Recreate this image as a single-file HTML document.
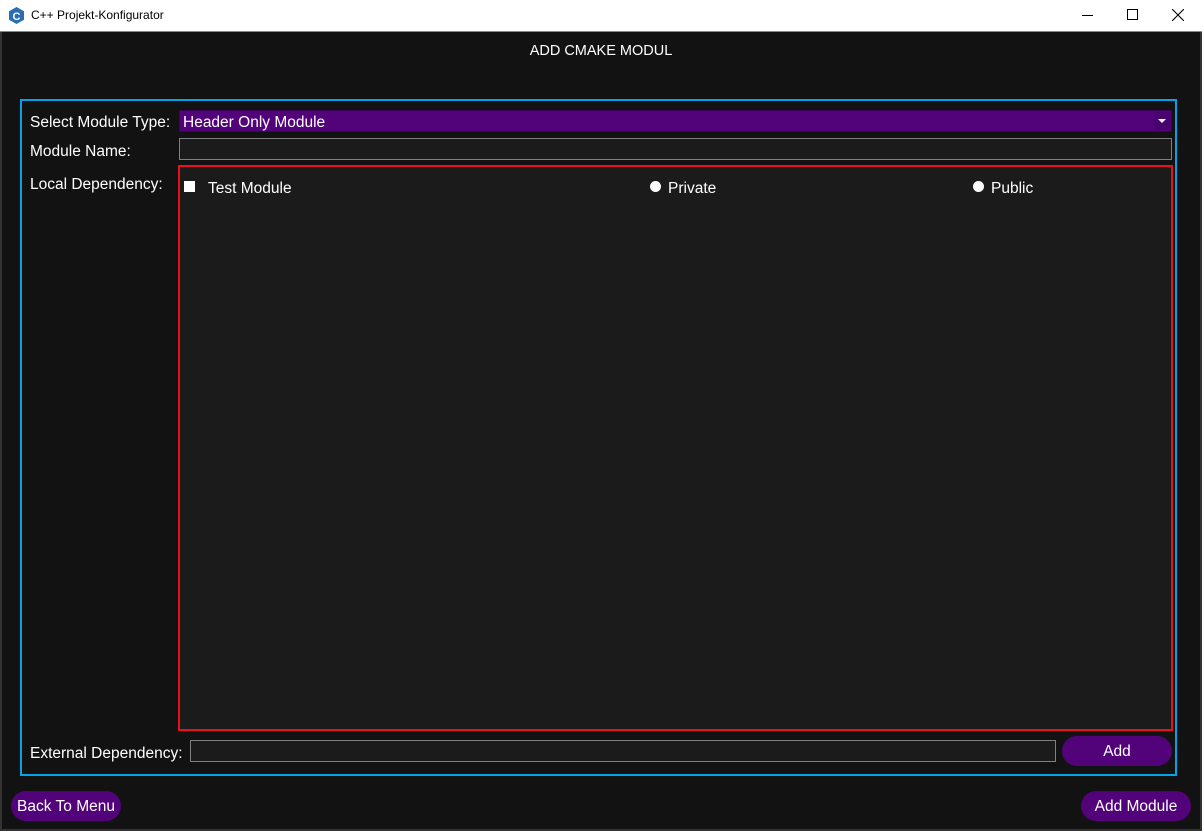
<!DOCTYPE html>
<html><head><style>
*{margin:0;padding:0;box-sizing:border-box}
body{width:1202px;height:831px;background:#121212;position:relative;overflow:hidden;font-family:"Liberation Sans",sans-serif;color:#fff}
.a{position:absolute}
.t{font-size:15.5px;white-space:nowrap}
.btn{position:absolute;background:#52037a;border-radius:15px;color:#fff;font-size:15.5px;text-align:center;line-height:30px;height:30px}
</style></head><body>
<div class="a" style="left:0;top:0;width:1202px;height:32px;background:#fff;border-bottom:1px solid #888"></div>
<svg class="a" style="left:8px;top:7px" width="17" height="17" viewBox="0 0 17 17"><polygon points="8.5,0 16,4.2 16,12.8 8.5,17 1,12.8 1,4.2" fill="#2a6db0"/><text x="8.5" y="13" font-size="11" font-weight="bold" fill="#fff" text-anchor="middle" font-family="Liberation Sans">C</text></svg>
<div class="a" style="left:31px;top:8px;font-size:12px;color:#000;font-family:'Liberation Sans',sans-serif">C++ Projekt-Konfigurator</div>
<div class="a" style="left:1082px;top:15px;width:11px;height:1px;background:#000"></div>
<div class="a" style="left:1127px;top:9px;width:11px;height:11px;border:1px solid #000"></div>
<svg class="a" style="left:1172px;top:9px" width="12" height="12"><path d="M0 0L12 12M12 0L0 12" stroke="#000" stroke-width="1.1"/></svg>
<div class="a" style="left:0;top:32px;width:2px;height:799px;background:#333"></div>
<div class="a" style="left:1200px;top:32px;width:2px;height:799px;background:#333"></div>
<div class="a" style="left:0;top:829px;width:1202px;height:2px;background:#333"></div>
<div class="a t" style="left:0;width:1202px;text-align:center;top:43px;font-size:14.5px">ADD CMAKE MODUL</div>
<div class="a" style="left:20px;top:99px;width:1157px;height:677px;border:2px solid #03a3e8"></div>
<div class="a t" style="left:30px;top:114px">Select Module Type:</div>
<div class="a" style="left:179px;top:110px;width:993px;height:22px;background:#52037a;border:1px solid #3a0258"></div>
<div class="a t" style="left:183px;top:114px">Header Only Module</div>
<div class="a" style="left:1154px;top:112px;width:16px;height:18px;background:#4a0270"></div>
<svg class="a" style="left:1157px;top:118px" width="10" height="6"><path d="M1 1H9L5 5Z" fill="#fff"/></svg>
<div class="a t" style="left:30px;top:143px">Module Name:</div>
<div class="a" style="left:179px;top:138px;width:993px;height:22px;background:#1b1b1b;border:1px solid #808080"></div>
<div class="a t" style="left:30px;top:176px">Local Dependency:</div>
<div class="a" style="left:178px;top:165px;width:995px;height:566px;background:#1b1b1b;border:2px solid #e8121e"></div>
<div class="a" style="left:184px;top:181px;width:11px;height:11px;background:#fff"></div>
<div class="a t" style="left:208px;top:180px">Test Module</div>
<div class="a" style="left:650px;top:181px;width:11px;height:11px;border-radius:50%;background:#fff"></div>
<div class="a t" style="left:668px;top:180px">Private</div>
<div class="a" style="left:973px;top:181px;width:11px;height:11px;border-radius:50%;background:#fff"></div>
<div class="a t" style="left:991px;top:180px">Public</div>
<div class="a t" style="left:30px;top:745px">External Dependency:</div>
<div class="a" style="left:190px;top:740px;width:866px;height:22px;background:#1b1b1b;border:1px solid #808080"></div>
<div class="btn" style="left:1062px;top:736px;width:110px;line-height:32px">Add</div>
<div class="btn" style="left:11px;top:791px;width:110px;line-height:32px">Back To Menu</div>
<div class="btn" style="left:1081px;top:791px;width:110px;line-height:32px">Add Module</div>
</body></html>
